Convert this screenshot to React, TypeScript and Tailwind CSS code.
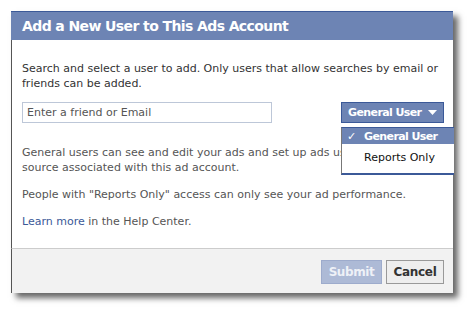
export default function App() {
  return (
    <div
      className="w-[472px] h-[313px] bg-white pt-[11px] pl-[11px]"
      style={{ fontFamily: '"DejaVu Sans", "Lucida Grande", Verdana, sans-serif' }}
    >
      <div className="w-[442px] shadow-[5px_5px_6px_rgba(0,0,0,0.6)]">
        {/* Header */}
        <div className="h-[29px] bg-[#6d84b4] border-t border-[#3b5998] flex items-center pl-[11px]">
          <h1 className="text-[14px] font-bold text-white tracking-[-0.6px]">
            Add a New User to This Ads Account
          </h1>
        </div>

        {/* Body */}
        <div className="relative h-[208px] bg-white border-l border-[#555] pl-[10px] pr-[10px] pt-[21px] text-[11px] leading-[15px] text-[#333]">
          <p>
            Search and select a user to add. Only users that allow searches by email or friends can be added.
          </p>

          <div className="mt-[11px] flex justify-between items-center">
            <div className="w-[250px] h-[21px] border border-[#bdc7d8] flex items-center px-[4px] text-[#555]">
              Enter a friend or Email
            </div>
            <div className="relative mr-[-1px]">
              <button className="w-[103px] h-[21px] bg-[#6d84b4] border border-[#3b5998] text-white font-bold flex items-center justify-between pl-[6px] pr-[6px] tracking-[-0.6px]">
                <span>General User</span>
                <svg width="9" height="5" viewBox="0 0 9 5">
                  <path d="M0 0h9L4.5 5z" fill="#fff" />
                </svg>
              </button>
              <div className="absolute left-0 top-[25px] w-[113px] bg-white border-l border-[#777] border-t border-t-[#3b5998] border-b-2 border-b-[#3b5998] pb-[3px] z-10">
                <div className="h-[16px] bg-[#6d84b4] text-white font-bold flex items-center tracking-[-0.6px]">
                  <span className="w-[22px] pl-[5px]">✓</span>
                  <span>General User</span>
                </div>
                <div className="h-[26px] flex items-center pl-[22px] text-[#111]">
                  Reports Only
                </div>
              </div>
            </div>
          </div>

          <p className="mt-[22px] text-[#555]">
            General users can see and edit your ads and set up ads using the funding source associated with this ad account.
          </p>
          <p className="mt-[12px] text-[#555]">
            People with "Reports Only" access can only see your ad performance.
          </p>
          <p className="mt-[12px] text-[#555]">
            <a className="text-[#3b5998]">Learn more</a> in the Help Center.
          </p>
        </div>

        {/* Footer */}
        <div className="h-[45px] bg-[#f2f2f2] border-t border-[#ccc] border-l border-l-[#555] flex items-center justify-end gap-[4px] pr-[9px] pt-[1px]">
          <button className="h-[24px] w-[61px] bg-[#adbad6] border border-[#9dabcc] text-[#eef1f7] text-[12px] font-bold tracking-[-0.4px]">
            Submit
          </button>
          <button className="h-[24px] w-[58px] bg-[#eeeeee] border border-[#999] text-[#333] text-[12px] font-bold tracking-[-0.3px]">
            Cancel
          </button>
        </div>
      </div>
    </div>
  )
}
